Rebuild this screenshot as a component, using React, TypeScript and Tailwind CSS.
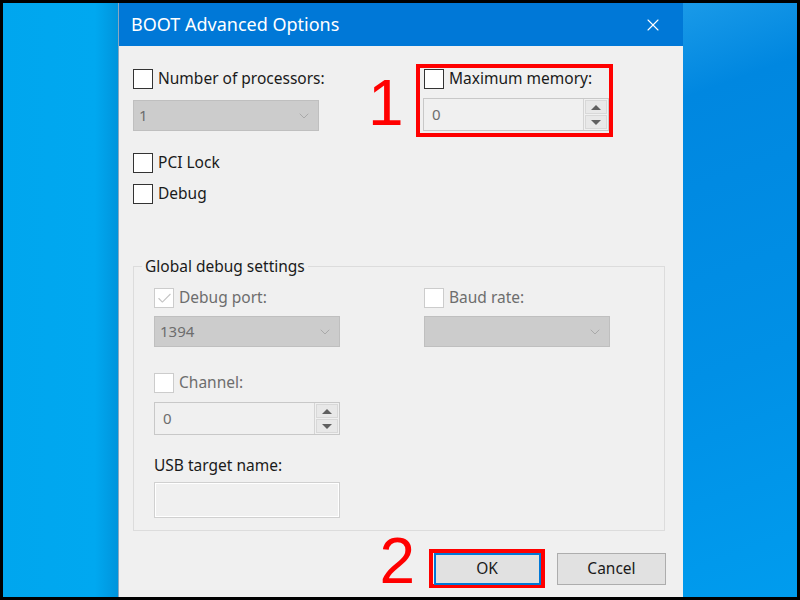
import { Check, ChevronDown, X } from "lucide-react";

const font = "font-['Noto_Sans',sans-serif]";

function Box({ checked, disabled }: { checked?: boolean; disabled?: boolean }) {
  return (
    <span
      className={`flex h-[20px] w-[20px] shrink-0 items-center justify-center bg-white border ${
        disabled ? "border-[#cccccc]" : "border-[#333333]"
      }`}
    >
      {checked && <Check size={17} strokeWidth={1.5} className="text-[#c4c4c4]" />}
    </span>
  );
}

function CheckRow({ label, checked, disabled }: { label: string; checked?: boolean; disabled?: boolean }) {
  return (
    <div className="flex items-center gap-[5px] h-[20px] whitespace-nowrap">
      <Box checked={checked} disabled={disabled} />
      <span className={`text-[15.5px] leading-none ${disabled ? "text-[#6d6d6d]" : "text-[#1a1a1a]"}`}>{label}</span>
    </div>
  );
}

function Combo({ value, w = "w-[186px]" }: { value?: string; w?: string }) {
  return (
    <div
      className={`${w} h-[31px] flex items-center justify-between bg-[#cccccc] border border-[#bfbfbf] pl-[5px] pr-[6px]`}
    >
      <span className="text-[15px] text-[#6d6d6d]">{value}</span>
      <ChevronDown size={16} strokeWidth={1.2} className="text-[#a0a0a0]" />
    </div>
  );
}

function Spin({ value }: { value: string }) {
  return (
    <div className="w-[186px] h-[33px] flex border border-[#c8c8c8] bg-[#f0f0f0]">
      <div className="flex-1 flex items-center pl-[8px] text-[15px] text-[#6d6d6d]">{value}</div>
      <div className="w-[25px] flex flex-col border-l border-[#d4d4d4] p-px gap-px">
        <div className="flex-1 flex items-center justify-center bg-[#e8e8e8] border border-[#d8d8d8]">
          <span className="w-0 h-0 border-x-[5px] border-x-transparent border-b-[5px] border-b-[#606060]" />
        </div>
        <div className="flex-1 flex items-center justify-center bg-[#e8e8e8] border border-[#d8d8d8]">
          <span className="w-0 h-0 border-x-[5px] border-x-transparent border-t-[5px] border-t-[#606060]" />
        </div>
      </div>
    </div>
  );
}

export default function App() {
  return (
    <div className={`w-[800px] h-[600px] bg-black p-[3px] overflow-hidden ${font}`}>
      <div className="flex h-full">
        <div className="w-[115px] bg-[linear-gradient(to_right,#00a6ee_0%,#00a8f0_80%,#0094dc_100%)]" />

        <div className="w-[565px] flex flex-col bg-[#f0f0f0] border-l border-[#8aa8c0]">
          <div className="h-[43px] shrink-0 bg-[#0078d7] flex items-center justify-between pl-[12px] pr-[20px]">
            <span className="text-[18px] text-white">BOOT Advanced Options</span>
            <X size={20} strokeWidth={1.3} className="text-white" />
          </div>

          <div className="flex-1 pt-[18px] pl-[14px] pr-[17px]">
            <div className="flex items-start">
              <div className="w-[186px] mt-[5px] flex flex-col gap-[11px]">
                <CheckRow label="Number of processors:" />
                <Combo value="1" />
              </div>
              <div className="w-[97px] flex justify-start pt-[7px] pl-[49px]">
                <span className="text-[64px] leading-none text-[#ff0000] font-['Liberation_Sans',sans-serif]">1</span>
              </div>
              <div className="w-[197px] h-[73px] border-[4px] border-[#ff0000] pt-px pl-[4px] flex flex-col gap-[9px]">
                <CheckRow label="Maximum memory:" />
                <div className="-ml-px">
                  <Spin value="0" />
                </div>
              </div>
            </div>

            <div className="mt-[16px] flex flex-col gap-[11px]">
              <CheckRow label="PCI Lock" />
              <CheckRow label="Debug" />
            </div>

            <fieldset className="mt-[52px] w-[532px] h-[275px] border border-[#dcdcdc]">
              <legend className="ml-[8px] px-[3px] text-[15.5px] text-[#1a1a1a] leading-[20px]">Global debug settings</legend>
              <div className="flex gap-[84px] pl-[20px] pt-[12px]">
                <div className="flex flex-col">
                  <CheckRow label="Debug port:" checked disabled />
                  <div className="mt-[8px]">
                    <Combo value="1394" />
                  </div>
                  <div className="mt-[26px]">
                    <CheckRow label="Channel:" disabled />
                  </div>
                  <div className="mt-[9px]">
                    <Spin value="0" />
                  </div>
                  <div className="mt-[20px] text-[15.5px] leading-[20px] text-[#1a1a1a]">USB target name:</div>
                  <div className="mt-[7px] w-[186px] h-[36px] border border-[#d0d0d0] bg-[#f0f0f0] shadow-[inset_0_0_0_1px_#ffffff]" />
                </div>
                <div className="flex flex-col">
                  <CheckRow label="Baud rate:" disabled />
                  <div className="mt-[8px]">
                    <Combo />
                  </div>
                </div>
              </div>
            </fieldset>

            <div className="mt-[18px] flex items-start justify-end">
              <span className="-mt-[20px] mr-[14px] text-[64px] leading-none text-[#ff0000] font-['Liberation_Sans',sans-serif]">
                2
              </span>
              <div className="border-[4px] border-[#ff0000] w-[116px] h-[39px] flex items-center justify-center">
                <div className="w-[107px] h-[32px] bg-[#e1e1e1] border-2 border-[#0078d7] flex items-center justify-center text-[15.5px] text-[#1a1a1a]">
                  OK
                </div>
              </div>
              <div className="mt-[4px] ml-[12px] w-[109px] h-[32px] bg-[#e1e1e1] border border-[#adadad] flex items-center justify-center text-[15.5px] text-[#1a1a1a]">
                Cancel
              </div>
            </div>
          </div>
        </div>

        <div className="flex-1 bg-[linear-gradient(160deg,#1a9ae8_0%,#0087e0_15%,#0090e6_60%,#009cee_100%)]" />
      </div>
    </div>
  );
}
